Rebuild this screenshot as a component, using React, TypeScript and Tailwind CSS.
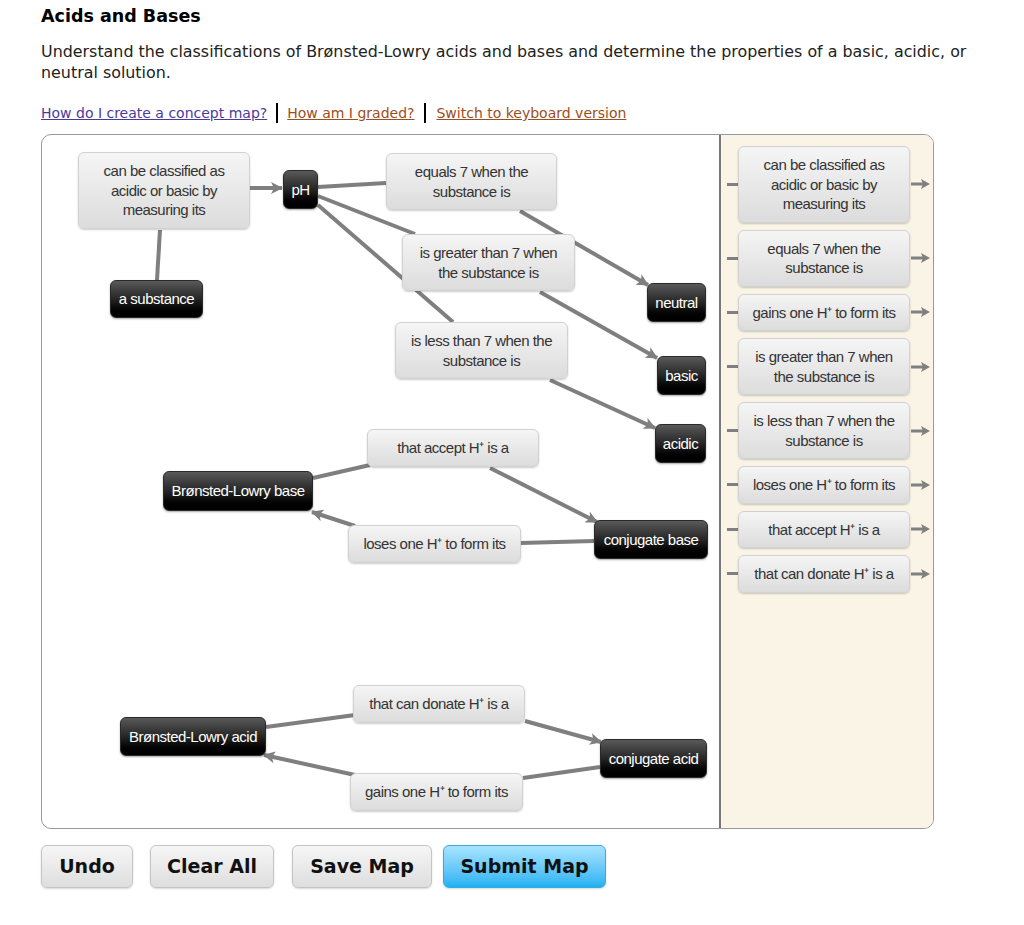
import React from "react";

const nodeFont = "font-['Liberation_Sans',Arial,sans-serif] tracking-[-0.5px]";

const uiFont = "font-['DejaVu_Sans',Verdana,sans-serif]";

const lightBox =
  "rounded-[6px] border border-[#d2d2d2] bg-gradient-to-b from-[#f5f5f5] to-[#dcdcdc] px-[8px] py-[8px] text-center text-[15px] leading-[19.5px] text-[#333] shadow-[0_1px_2px_rgba(0,0,0,0.2)]";

const darkBox =
  "flex items-center justify-center rounded-[6px] border border-[#2a2a2a] bg-gradient-to-b from-[#5a5a5a] via-[#262626] to-black text-[15px] leading-[20px] text-white shadow-[0_1px_2px_rgba(0,0,0,0.35)]";

const panelItems = [
  "can be classified as acidic or basic by measuring its",
  "equals 7 when the substance is",
  "gains one H⁺ to form its",
  "is greater than 7 when the substance is",
  "is less than 7 when the substance is",
  "loses one H⁺ to form its",
  "that accept H⁺ is a",
  "that can donate H⁺ is a",
];

function MapLines() {
  const plain: [number, number, number, number][] = [
    [118, 95, 115, 145],
    [276, 52, 344, 48],
    [276, 61, 373, 99],
    [276, 70, 411, 187],
    [271, 343, 328, 330],
    [552, 406, 479, 408],
    [224, 592, 313, 580],
    [558, 632, 481, 643],
  ];
  const arrows: [number, number, number, number][] = [
    [208, 53, 240, 53],
    [478, 76, 606, 150],
    [498, 157, 615, 223],
    [508, 245, 613, 293],
    [448, 333, 555, 387],
    [313, 391, 270, 377],
    [483, 586, 559, 607],
    [313, 640, 222, 620],
  ];
  return (
    <svg className="absolute left-0 top-0" width="679" height="693" viewBox="0 0 679 693">
      <defs>
        <marker
          id="head"
          viewBox="0 0 12 12"
          refX="11"
          refY="6"
          markerWidth="12"
          markerHeight="12"
          markerUnits="userSpaceOnUse"
          orient="auto"
        >
          <path d="M0 0 L12 6 L0 12 L3 6 Z" fill="#7f7f7f" />
        </marker>
      </defs>
      {plain.map(([x1, y1, x2, y2], i) => (
        <line key={"p" + i} x1={x1} y1={y1} x2={x2} y2={y2} stroke="#7f7f7f" strokeWidth="4" />
      ))}
      {arrows.map(([x1, y1, x2, y2], i) => (
        <line
          key={"a" + i}
          x1={x1}
          y1={y1}
          x2={x2}
          y2={y2}
          stroke="#7f7f7f"
          strokeWidth="4"
          markerEnd="url(#head)"
        />
      ))}
    </svg>
  );
}

function ConceptCanvas() {
  return (
    <div className={`relative w-[679px] shrink-0 border-r-2 border-[#777] ${nodeFont}`}>
      <MapLines />

      <div className={`absolute left-[36px] top-[17px] w-[172px] ${lightBox}`}>
        can be classified as acidic or basic by measuring its
      </div>
      <div className={`absolute left-[241px] top-[35px] h-[39px] w-[35px] ${darkBox}`}>pH</div>
      <div className={`absolute left-[344px] top-[18px] w-[171px] ${lightBox}`}>
        equals 7 when the substance is
      </div>
      <div className={`absolute left-[68px] top-[145px] h-[38px] w-[93px] ${darkBox}`}>a substance</div>
      <div className={`absolute left-[360px] top-[99px] w-[173px] ${lightBox}`}>
        is greater than 7 when the substance is
      </div>
      <div className={`absolute left-[605px] top-[148px] h-[39px] w-[59px] ${darkBox}`}>neutral</div>
      <div className={`absolute left-[353px] top-[187px] w-[173px] ${lightBox}`}>
        is less than 7 when the substance is
      </div>
      <div className={`absolute left-[615px] top-[221px] h-[39px] w-[49px] ${darkBox}`}>basic</div>
      <div className={`absolute left-[613px] top-[289px] h-[39px] w-[51px] ${darkBox}`}>acidic</div>
      <div className={`absolute left-[325px] top-[294px] w-[172px] ${lightBox}`}>
        that accept H⁺ is a
      </div>
      <div className={`absolute left-[121px] top-[336px] h-[40px] w-[150px] ${darkBox}`}>
        Brønsted-Lowry base
      </div>
      <div className={`absolute left-[306px] top-[390px] w-[173px] ${lightBox}`}>
        loses one H⁺ to form its
      </div>
      <div className={`absolute left-[552px] top-[385px] h-[39px] w-[114px] ${darkBox}`}>
        conjugate base
      </div>
      <div className={`absolute left-[311px] top-[550px] w-[172px] ${lightBox}`}>
        that can donate H⁺ is a
      </div>
      <div className={`absolute left-[78px] top-[582px] h-[39px] w-[146px] ${darkBox}`}>
        Brønsted-Lowry acid
      </div>
      <div className={`absolute left-[558px] top-[604px] h-[39px] w-[107px] ${darkBox}`}>
        conjugate acid
      </div>
      <div className={`absolute left-[308px] top-[638px] w-[173px] ${lightBox}`}>
        gains one H⁺ to form its
      </div>
    </div>
  );
}

function Palette() {
  return (
    <div className={`flex flex-1 flex-col gap-[7px] rounded-r-[9px] bg-[#faf4e6] pt-[11px] ${nodeFont}`}>
      {panelItems.map((text) => (
        <div key={text} className="flex items-center">
          <span className="ml-[6px] h-[3px] w-[11px] bg-[#808080]" />
          <div className={`w-[172px] ${lightBox}`}>{text}</div>
          <svg className="ml-[1px]" width="20" height="12" viewBox="0 0 20 12">
            <line x1="0" y1="6" x2="13" y2="6" stroke="#808080" strokeWidth="3" />
            <path d="M10 1 L19 6 L10 11 L12 6 Z" fill="#808080" />
          </svg>
        </div>
      ))}
    </div>
  );
}

const grayButton =
  "h-[43px] rounded-[6px] border border-[#c4c4c4] bg-gradient-to-b from-[#f6f6f6] to-[#dedede] text-[19px] font-bold text-[#111] shadow-[0_1px_2px_rgba(0,0,0,0.15)]";

export default function App() {
  return (
    <div className={`min-h-screen bg-white px-[41px] pt-[4px] text-[#222] ${uiFont}`}>
      <h1 className="text-[17.5px] font-bold leading-[24px] text-black">Acids and Bases</h1>
      <p className="mt-[13px] w-[950px] text-[15.9px] leading-[21px] text-[#222]">
        Understand the classifications of Brønsted-Lowry acids and bases and determine the properties of a
        basic, acidic, or <br />
        neutral solution.
      </p>

      <div className="mt-[20px] flex items-center text-[14px] leading-[20px]">
        <a href="#" className="text-[#4b3a9e] underline">
          How do I create a concept map?
        </a>
        <span className="mx-[9px] h-[20px] w-[2px] bg-black" />
        <a href="#" className="text-[#9c4e1c] underline">
          How am I graded?
        </a>
        <span className="mx-[10px] h-[20px] w-[2px] bg-black" />
        <a href="#" className="text-[#9c4e1c] underline">
          Switch to keyboard version
        </a>
      </div>

      <div className="mt-[11px] flex h-[695px] w-[893px] rounded-[10px] border border-[#999] bg-white">
        <ConceptCanvas />
        <Palette />
      </div>

      <div className="mt-[16px] flex items-center">
        <button className={`w-[92px] ${grayButton}`}>Undo</button>
        <button className={`ml-[17px] w-[124px] ${grayButton}`}>Clear All</button>
        <button className={`ml-[18px] w-[140px] ${grayButton}`}>Save Map</button>
        <button className="ml-[11px] h-[43px] w-[163px] rounded-[6px] border border-[#3aa9e2] bg-gradient-to-b from-[#a6e4ff] to-[#18b2f2] text-[19px] font-bold text-[#111] shadow-[0_1px_2px_rgba(0,0,0,0.15)]">
          Submit Map
        </button>
      </div>
    </div>
  );
}
